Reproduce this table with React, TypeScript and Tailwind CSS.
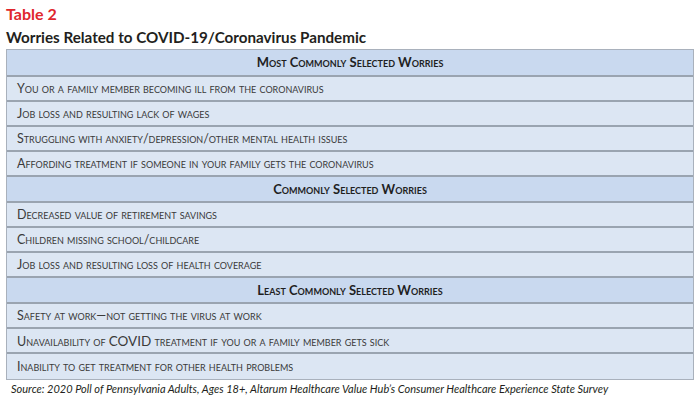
import React from "react";

type Row = { kind: "h" | "r"; text: React.ReactNode };

const rows: Row[] = [
  { kind: "h", text: "Most Commonly Selected Worries" },
  { kind: "r", text: "You or a family member becoming ill from the coronavirus" },
  { kind: "r", text: "Job loss and resulting lack of wages" },
  { kind: "r", text: "Struggling with anxiety/depression/other mental health issues" },
  { kind: "r", text: "Affording treatment if someone in your family gets the coronavirus" },
  { kind: "h", text: "Commonly Selected Worries" },
  { kind: "r", text: "Decreased value of retirement savings" },
  { kind: "r", text: "Children missing school/childcare" },
  { kind: "r", text: "Job loss and resulting loss of health coverage" },
  { kind: "h", text: "Least Commonly Selected Worries" },
  { kind: "r", text: "Safety at work\u2014not getting the virus at work" },
  {
    kind: "r",
    text: (
      <span>
        Unavailability of <span className="[font-variant:normal] text-[13.5px]">COVID</span> treatment if you or a family member gets sick
      </span>
    ),
  },
  { kind: "r", text: "Inability to get treatment for other health problems" },
];

export default function App() {
  return (
    <div
      className="w-[700px] h-[401px] bg-white overflow-hidden"
      style={{ fontFamily: "Lato, 'Open Sans', sans-serif" }}
    >
      <div className="pl-[6px] pt-[4px]">
        <div className="text-[16px] leading-[20px] font-bold text-[#e0262d]">Table 2</div>
        <div className="text-[15.2px] leading-[20px] font-bold text-[#231f20] mt-[3px]">
          Worries Related to COVID-19/Coronavirus Pandemic
        </div>
      </div>
      <div className="ml-[6px] mt-[2px] w-[688px] border border-[#a9b1bc] flex flex-col">
        {rows.map((r, i) => {
          const last = i === rows.length - 1;
          const border = last ? "" : "border-b-2 border-[#9aa4b0]";
          if (r.kind === "h") {
            const h = i === 0 ? "h-[27px]" : "h-[26px]";
            return (
              <div
                key={i}
                className={`${h} bg-[#c9d9ef] flex items-center justify-center pt-[1px] text-[13px] font-bold text-[#1f1f1f] [font-variant:small-caps] ${border}`}
              >
                {r.text}
              </div>
            );
          }
          return (
            <div
              key={i}
              className={`h-[25px] bg-[#dce6f3] flex items-center pl-[10px] pt-[2px] text-[12.5px] text-[#3a3a3a] [font-variant:small-caps] ${border}`}
            >
              {r.text}
            </div>
          );
        })}
      </div>
      <div className="pl-[11px] mt-[2px] text-[11px] italic text-[#231f20] leading-[14px]">
        Source: 2020 Poll of Pennsylvania Adults, Ages 18+, Altarum Healthcare Value Hub&rsquo;s Consumer Healthcare Experience State Survey
      </div>
    </div>
  );
}
